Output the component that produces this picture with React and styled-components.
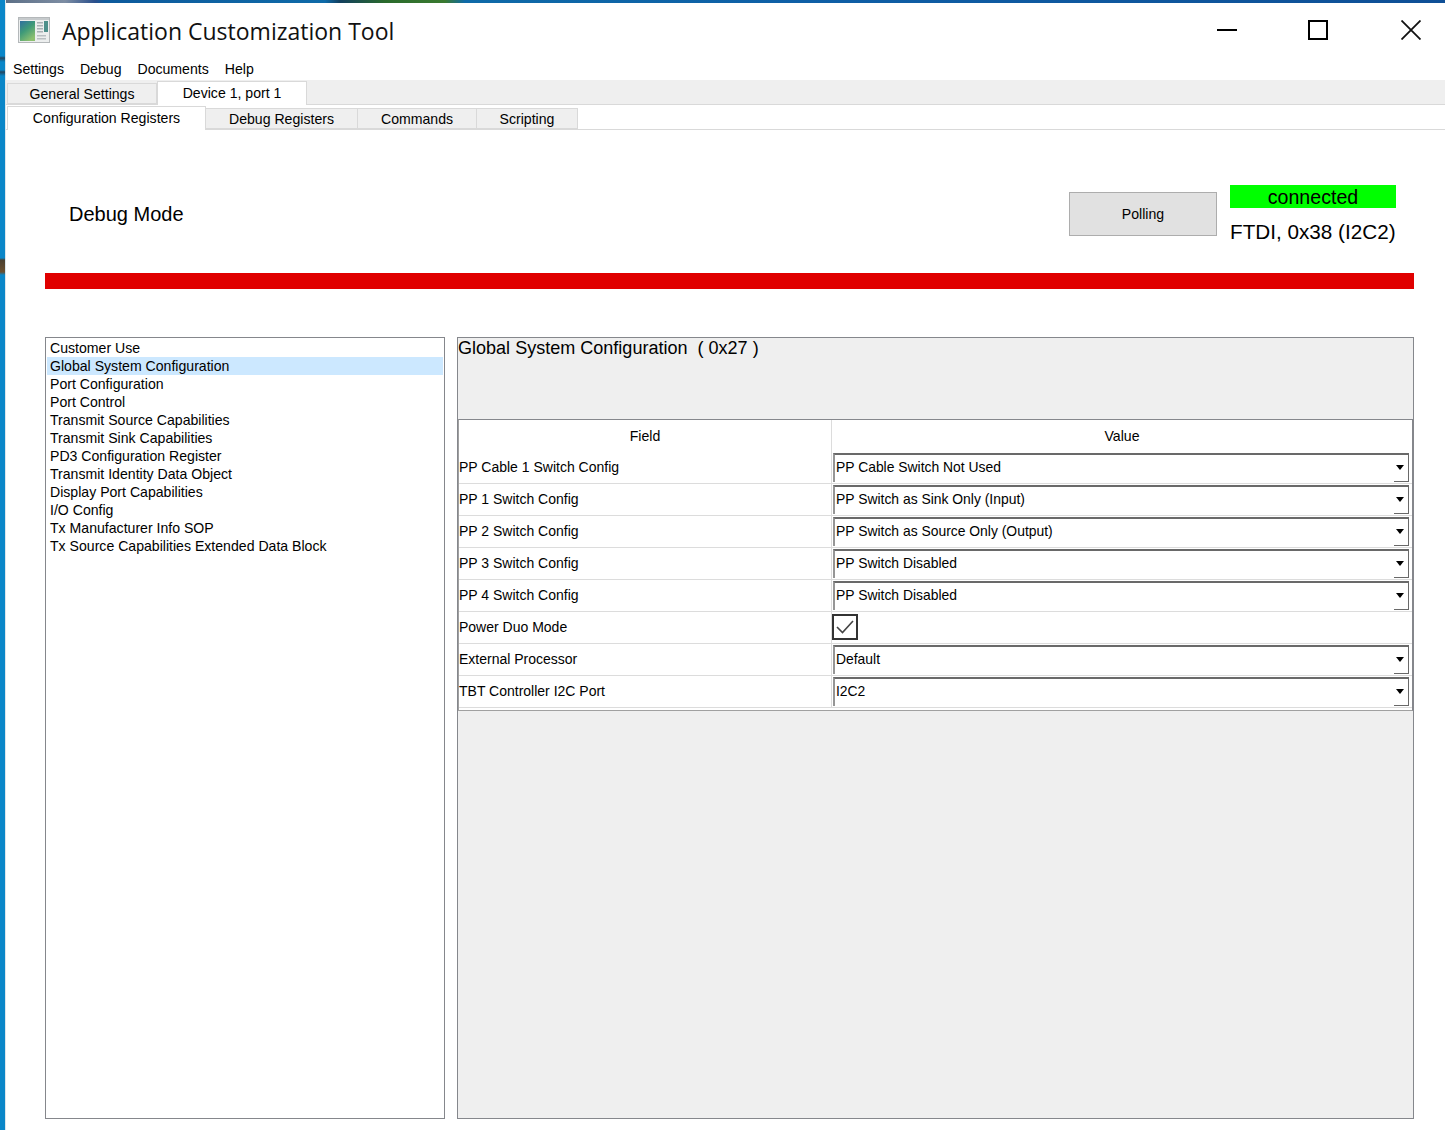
import React from 'react';
import styled, { createGlobalStyle } from 'styled-components';

const GlobalStyle = createGlobalStyle`
    html, body {
        margin: 0;
        padding: 0;
        background: #fff;
    }
    body {
        font-family: "Liberation Sans", Arial, sans-serif;
        font-size: 14.1px;
        color: #000;
        overflow: hidden;
    }
`;

const Screen = styled.div`
    display: flex;
    width: 1445px;
    height: 1130px;
    overflow: hidden;
`;
const DesktopEdge = styled.div`
    position: relative;
    width: 5px;
    flex: none;
    box-shadow: 1px 0 0 #dbe6ec;
    background: linear-gradient(
        to bottom,
        #0a86c8 0,
        #0a86c8 56px,
        #24465e 58px,
        #0a86c8 62px,
        #0a86c8 70px,
        #24465e 72px,
        #0a86c8 76px,
        #0a86c8 258px,
        #4a4030 260px,
        #6a5030 272px,
        #0a86c8 275px,
        #0a86c8 100%
    );
`;
const Window = styled.div`
    flex: 1;
    min-width: 0;
    display: flex;
    flex-direction: column;
`;
const TopEdge = styled.div`
    height: 3px;
    background: linear-gradient(
        to right,
        #5c6f86 0,
        #7d8da3 60px,
        #2a4f8c 90px,
        #0d5a9c 100px,
        #0e6aa8 320px,
        #123f5e 335px,
        #2a6a2c 380px,
        #3a7a30 440px,
        #0e6aa8 460px,
        #0f5fa6 800px,
        #0f4f96 100%
    );
`;
const TitleBar = styled.div`
    height: 55px;
    display: flex;
    align-items: center;
    padding: 0 24px 2px 13px;
    box-sizing: border-box;
`;
const AppTitle = styled.div`
    margin-left: 12px;
    padding-top: 2px;
    font-family: "Open Sans", "Noto Sans", sans-serif;
    font-size: 23px;
    flex: 1;
    color: #111;
`;
const WindowButtons = styled.div`
    display: flex;
    align-items: center;
    gap: 71px;
    & > svg:last-child {
        margin-left: 2px;
    }
`;
const MenuBar = styled.div`
    height: 22px;
    display: flex;
    align-items: center;
    gap: 16px;
    padding-left: 8px;
`;
const TabStrip = styled.div`
    height: 25px;
    display: flex;
    align-items: flex-end;
    background: #efefef;
    border-bottom: 1px solid #d9d9d9;
    box-sizing: border-box;
    padding-left: 2px;
`;
const SubTabStrip = styled(TabStrip)`
    background: #fff;
`;
const Tab = styled.div`
    width: ${p => p.$w}px;
    height: ${p => (p.$active ? 24 : 21)}px;
    margin-bottom: ${p => (p.$active ? -1 : 0)}px;
    padding-bottom: ${p => (p.$active ? 2 : 0)}px;
    display: flex;
    align-items: center;
    justify-content: center;
    box-sizing: border-box;
    background: ${p => (p.$active ? '#fff' : '#efefef')};
    border: 1px solid #d9d9d9;
    border-bottom: ${p => (p.$active ? 'none' : '1px solid #d9d9d9')};
    border-left: ${p => (p.$first || p.$active ? '1px solid #d9d9d9' : 'none')};
`;
const Content = styled.div`
    flex: 1;
    display: flex;
    flex-direction: column;
    padding: 0 31px 11px 40px;
    min-height: 0;
`;
const StatusRow = styled.div`
    height: 143px;
    display: flex;
    align-items: flex-start;
    padding-top: 55px;
    box-sizing: border-box;
`;
const ModeLabel = styled.div`
    flex: 1;
    margin-left: 24px;
    font-size: 20px;
    line-height: 58px;
`;
const PollingButton = styled.div`
    width: 148px;
    height: 44px;
    margin-top: 7px;
    display: flex;
    align-items: center;
    justify-content: center;
    box-sizing: border-box;
    background: #e1e1e1;
    border: 1px solid #adadad;
`;
const Connection = styled.div`
    margin-left: 13px;
    margin-right: 18px;
    width: 166px;
    display: flex;
    flex-direction: column;
`;
const ConnectedBadge = styled.div`
    height: 23px;
    background: #00ff00;
    text-align: center;
    font-size: 19.6px;
    line-height: 24px;
`;
const Interface = styled.div`
    margin-top: 12px;
    font-size: 20.7px;
    line-height: 24px;
    white-space: nowrap;
`;
const RedBar = styled.div`
    height: 16px;
    background: #e00000;
    flex: none;
`;
const Panels = styled.div`
    flex: 1;
    margin-top: 48px;
    display: flex;
    gap: 12px;
    min-height: 0;
`;
const RegisterList = styled.div`
    width: 400px;
    flex: none;
    box-sizing: border-box;
    border: 1px solid #85878c;
    padding: 1px 1px 0;
    background: #fff;
`;
const RegisterItem = styled.div`
    height: 18px;
    line-height: 19px;
    padding-left: 3px;
    background: ${p => (p.$selected ? '#cce8ff' : 'transparent')};
`;
const Detail = styled.div`
    flex: 1;
    box-sizing: border-box;
    border: 1px solid #85878c;
    background: #efefef;
    display: flex;
    flex-direction: column;
`;
const DetailTitle = styled.div`
    height: 81px;
    flex: none;
    box-sizing: border-box;
    font-size: 18.05px;
    line-height: 21px;
    white-space: pre;
`;
const FieldTable = styled.div`
    box-sizing: border-box;
    height: 292px;
    background: #fff;
    border-top: 1px solid #85878c;
    border-bottom: 1px solid #a0a0a0;
    border-left: 1px solid #a0a0a0;
    border-right: 1px solid #85878c;
    display: grid;
    grid-template-columns: 373px 1fr;
    grid-template-rows: 32px repeat(8, 32px) 1fr;
`;
const HeadCell = styled.div`
    display: flex;
    align-items: center;
    justify-content: center;
    border-right: ${p => (p.$first ? '1px solid #dcdcdc' : 'none')};
`;
const FieldCell = styled.div`
    display: flex;
    align-items: center;
    font-size: 14px;
    padding-bottom: 2px;
    box-sizing: border-box;
    border-bottom: 1px solid #dcdcdc;
    border-right: 1px solid #dcdcdc;
`;
const ValueCell = styled.div`
    display: flex;
    align-items: stretch;
    padding-right: 3px;
    border-bottom: 1px solid #dcdcdc;
`;
const Select = styled.div`
    position: relative;
    flex: 1;
    box-sizing: border-box;
    margin: 1px 0 1px 1px;
    padding: 0 0 4px 1px;
    display: flex;
    align-items: center;
    font-size: 13.9px;
    border-top: 2px solid #696969;
    border-left: 2px solid #969696;
    border-right: 1px solid #696969;
    &::after {
        content: "";
        position: absolute;
        right: -1px;
        bottom: 0;
        width: 15px;
        height: 1px;
        background: #696969;
    }
`;
const Arrow = styled.span`
    position: absolute;
    right: 4px;
    top: 10px;
    width: 0;
    height: 0;
    border-left: 4px solid transparent;
    border-right: 4px solid transparent;
    border-top: 5px solid #000;
`;
const CheckBox = styled.div`
    width: 26px;
    height: 26px;
    margin-top: 2px;
    box-sizing: border-box;
    border: 2px solid #333;
    display: flex;
    align-items: center;
    justify-content: center;
`;

const registers = [
    'Customer Use',
    'Global System Configuration',
    'Port Configuration',
    'Port Control',
    'Transmit Source Capabilities',
    'Transmit Sink Capabilities',
    'PD3 Configuration Register',
    'Transmit Identity Data Object',
    'Display Port Capabilities',
    'I/O Config',
    'Tx Manufacturer Info SOP',
    'Tx Source Capabilities Extended Data Block',
];

const fields = [
    { name: 'PP Cable 1 Switch Config', value: 'PP Cable Switch Not Used' },
    { name: 'PP 1 Switch Config', value: 'PP Switch as Sink Only (Input)' },
    { name: 'PP 2 Switch Config', value: 'PP Switch as Source Only (Output)' },
    { name: 'PP 3 Switch Config', value: 'PP Switch Disabled' },
    { name: 'PP 4 Switch Config', value: 'PP Switch Disabled' },
    { name: 'Power Duo Mode', checked: true },
    { name: 'External Processor', value: 'Default' },
    { name: 'TBT Controller I2C Port', value: 'I2C2' },
];

const AppIcon = () => (
    <svg width="32" height="28" viewBox="0 0 32 28">
        <defs>
            <linearGradient id="pane" x1="0" y1="0" x2="0.6" y2="1">
                <stop offset="0" stopColor="#2f6fa0" />
                <stop offset="0.5" stopColor="#3f9a78" />
                <stop offset="1" stopColor="#8cc070" />
            </linearGradient>
        </defs>
        <rect x="0.5" y="1.5" width="31" height="25" fill="#eceeee" stroke="#b4b8ba" />
        <rect x="1" y="2" width="30" height="2" fill="#c6cacc" />
        <rect x="2" y="5" width="15" height="20" fill="url(#pane)" />
        <rect x="19" y="6" width="6" height="1.5" fill="#a9b0b4" />
        <rect x="19" y="9" width="6" height="1.5" fill="#a9b0b4" />
        <rect x="19" y="12" width="6" height="1.5" fill="#a9b0b4" />
        <rect x="19" y="15" width="6" height="1.5" fill="#a9b0b4" />
        <rect x="19" y="19" width="9" height="1.5" fill="#b9bfc2" />
        <rect x="19" y="22" width="9" height="1.5" fill="#b9bfc2" />
        <rect x="26" y="5" width="4" height="11" fill="#4d8f8a" />
    </svg>
);

const MinimizeIcon = () => (
    <svg width="20" height="20" viewBox="0 0 20 20">
        <path d="M0 10H20" stroke="#000" strokeWidth="2" />
    </svg>
);
const MaximizeIcon = () => (
    <svg width="20" height="20" viewBox="0 0 20 20">
        <rect x="1" y="1" width="18" height="18" fill="none" stroke="#000" strokeWidth="2" />
    </svg>
);
const CloseIcon = () => (
    <svg width="20" height="20" viewBox="0 0 20 20">
        <path d="M0.5 0.5L19.5 19.5M19.5 0.5L0.5 19.5" stroke="#111" strokeWidth="1.8" />
    </svg>
);

export default function App() {
    return (
        <Screen>
            <GlobalStyle />
            <DesktopEdge />
            <Window>
                <TopEdge />
                <TitleBar>
                    <AppIcon />
                    <AppTitle>Application Customization Tool</AppTitle>
                    <WindowButtons>
                        <MinimizeIcon />
                        <MaximizeIcon />
                        <CloseIcon />
                    </WindowButtons>
                </TitleBar>
                <MenuBar>
                    <span>Settings</span>
                    <span>Debug</span>
                    <span>Documents</span>
                    <span>Help</span>
                </MenuBar>
                <TabStrip>
                    <Tab $w={150} $first>General Settings</Tab>
                    <Tab $w={150} $active>Device 1, port 1</Tab>
                </TabStrip>
                <SubTabStrip>
                    <Tab $w={199} $active>Configuration Registers</Tab>
                    <Tab $w={152}>Debug Registers</Tab>
                    <Tab $w={119}>Commands</Tab>
                    <Tab $w={101}>Scripting</Tab>
                </SubTabStrip>
                <Content>
                    <StatusRow>
                        <ModeLabel>Debug Mode</ModeLabel>
                        <PollingButton>Polling</PollingButton>
                        <Connection>
                            <ConnectedBadge>connected</ConnectedBadge>
                            <Interface>FTDI, 0x38 (I2C2)</Interface>
                        </Connection>
                    </StatusRow>
                    <RedBar />
                    <Panels>
                        <RegisterList>
                            {registers.map((name, i) => (
                                <RegisterItem key={name} $selected={i === 1}>{name}</RegisterItem>
                            ))}
                        </RegisterList>
                        <Detail>
                            <DetailTitle>Global System Configuration  ( 0x27 )</DetailTitle>
                            <FieldTable>
                                <HeadCell $first>Field</HeadCell>
                                <HeadCell>Value</HeadCell>
                                {fields.map(field => (
                                    <React.Fragment key={field.name}>
                                        <FieldCell>{field.name}</FieldCell>
                                        <ValueCell>
                                            {field.checked ? (
                                                <CheckBox>
                                                    <svg width="18" height="14" viewBox="0 0 18 14">
                                                        <path d="M1 7L6.5 12.5L17 1" fill="none" stroke="#444" strokeWidth="1.6" />
                                                    </svg>
                                                </CheckBox>
                                            ) : (
                                                <Select>
                                                    {field.value}
                                                    <Arrow />
                                                </Select>
                                            )}
                                        </ValueCell>
                                    </React.Fragment>
                                ))}
                            </FieldTable>
                        </Detail>
                    </Panels>
                </Content>
            </Window>
        </Screen>
    );
}
